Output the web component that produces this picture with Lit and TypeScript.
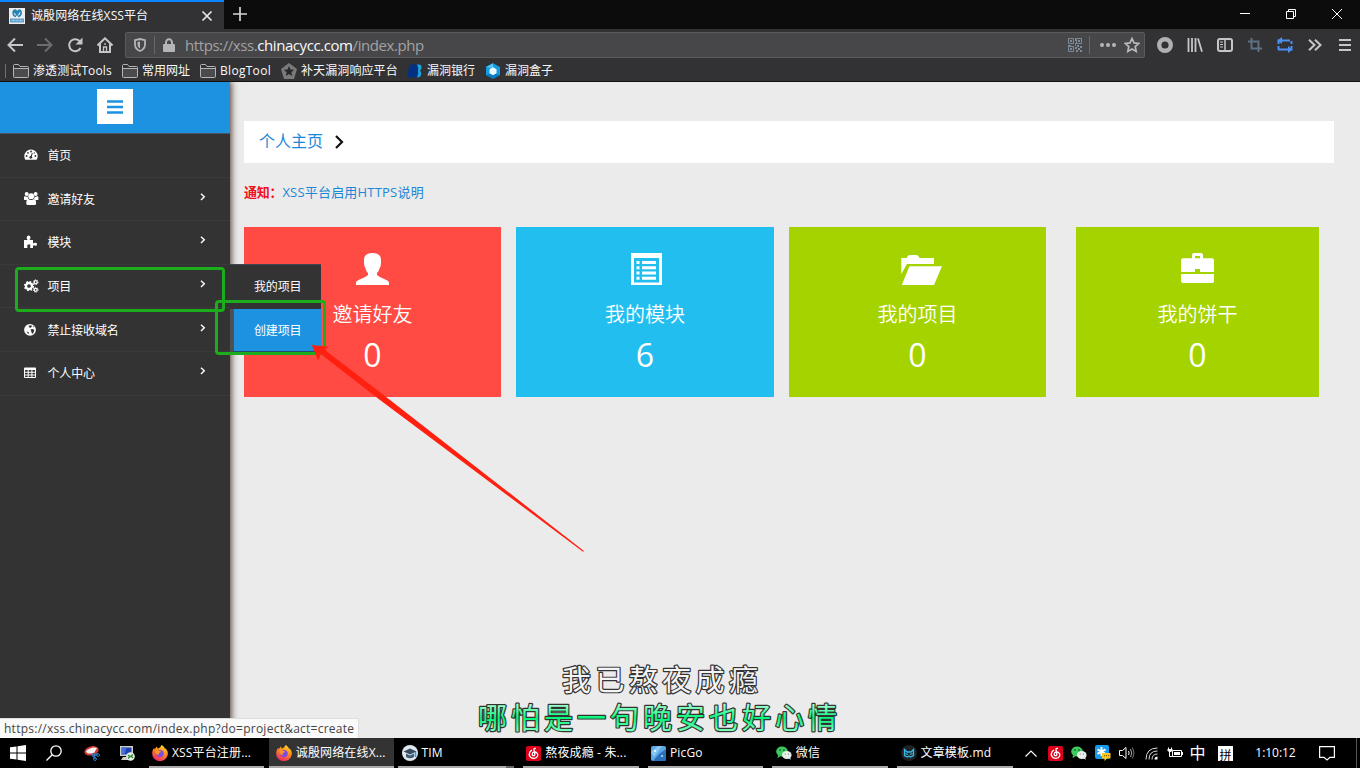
import { LitElement, html, svg, css, TemplateResult } from "lit";
import { customElement } from "lit/decorators.js";
import { classMap } from "lit/directives/class-map.js";

const icon = (w: number, h: number, body: TemplateResult, box = `0 0 ${w} ${h}`) =>
  html`<svg width=${w} height=${h} viewBox=${box} fill="none">${body}</svg>`;

const netease = () => icon(15, 15, svg`
  <rect width="15" height="15" rx="2" fill="#dd001b"/>
  <path d="M9.900 2.600C8.600 2 7.700 2.700 8 4l.9 4.300c.2 1.600-2.600 1.900-2.700.1C6.100 6.300 9 5.200 10.800 6.700c2.200 2 .7 5.500-2.900 5.600C4.200 12.400 2.300 9.200 3.800 6.200c.5-1 1.300-1.700 2.300-2.100" stroke="#fff" stroke-width="1.300"/>`);

const wechat = () => icon(16, 14, svg`
  <ellipse cx="6" cy="5.500" rx="5.800" ry="5" fill="#3ecb5c"/><path d="M2 9l-.5 3L5 10z" fill="#3ecb5c"/>
  <circle cx="4" cy="4" r=".8" fill="#125"/><circle cx="8" cy="4" r=".8" fill="#125"/>
  <ellipse cx="10.800" cy="9" rx="4.800" ry="4" fill="#e9eeea"/><path d="M12 12l2.800 1.700-.6-3z" fill="#e9eeea"/>
  <circle cx="9.200" cy="8" r=".6" fill="#667"/><circle cx="12.400" cy="8" r=".6" fill="#667"/>`);

const firefox = () => icon(16, 16, svg`
  <defs><linearGradient id="fx" x1=".8" y1="0" x2=".3" y2="1"><stop stop-color="#ffe226"/><stop offset=".45" stop-color="#ff8a1d"/><stop offset="1" stop-color="#f0246a"/></linearGradient></defs>
  <path d="M9.500 0c2 1 3 2.300 3.500 3.800l.7-.4c1.700 2 2.300 3.700 2.100 5.500C15.400 13 12.200 16 8 16 3.500 16 .2 12.600.2 8.400c0-2.300.7-4 2-5.600l.5 1.600C3.500 2.900 4.200 2 5 1.400L5.500 3.600C7.300 3.400 8.600 2 9.500 0z" fill="url(#fx)"/>
  <circle cx="8" cy="8.600" r="3.700" fill="#7d4be0"/><path d="M3.500 5.500c2-.8 3.200 0 4.600.4 1 .3 1 1.200-.2 1.600-1.700.6-1.800 1.800-.4 2.600C5 10.400 3.300 8.200 3.500 5.500z" fill="#ff9a1f"/>`);

const folder = () => icon(16, 14, svg`<path d="M.5 12.500v-11q0-1 1-1h4l1.500 2h7.500q1 0 1 1v9q0 1-1 1h-13q-1 0-1-1zM.5 4.500h15" stroke="#b4b4b6" stroke-width="1"/><path d="M1 5h14v8H1z" fill="#4b4b4d"/>`);

const BOOKMARKS = [
  { cls: "b1", text: "渗透测试Tools", glyph: folder },
  { cls: "b2", text: "常用网址", glyph: folder },
  { cls: "b3", text: "BlogTool", glyph: folder },
  { cls: "b4", text: "补天漏洞响应平台", glyph: () => icon(16, 16, svg`<path d="M8 0l8 6-3 10H3L0 6z" fill="#7a7a7a"/><path d="M8 3l1.500 3.400 3.700.3-2.800 2.500.8 3.700L8 11l-3.200 1.900.8-3.700-2.800-2.500 3.700-.3z" fill="#29292b"/>`) },
  { cls: "b5", text: "漏洞银行", glyph: () => icon(16, 14, svg`<path d="M3 .5h7.500v13H.5q0-8 2.500-13z" fill="#05307f"/><path d="M10 .5h2q3 0 2.500 3.500-.3 2-1.600 2.800 1.700 1 1.300 3.500-.6 3.200-4.200 3.200 2-3 1-6.500 1-3-1-6.500z" fill="#1aa4de"/>`) },
  { cls: "b6", text: "漏洞盒子", glyph: () => icon(16, 16, svg`<path d="M8 .2l7 3.900v7.800l-7 3.900-7-3.900V4.100z" fill="#159be0"/><path d="M1 4.100L8 .2v5z" fill="#50c8f5"/><path d="M1 12l7-2 7 2-7 3.800z" fill="#087bc4"/><path d="M8 4.200l3.500 2v4L8 12.200l-3.500-2v-4z" fill="#e8faff"/>`) },
];

const NAV = [
  { text: "首页", more: false, glyph: svg`<path d="M.3 8.200a6.700 6.700 0 1 1 13.400 0q0 1.800-1 3.500H1.300q-1-1.700-1-3.500z" fill="#fff"/><g fill="#333"><circle cx="2.600" cy="8" r=".9"/><circle cx="4" cy="4.800" r=".9"/><circle cx="7" cy="3.500" r=".9"/><circle cx="11.400" cy="8" r=".9"/><circle cx="10.300" cy="4.900" r=".7"/><circle cx="6.800" cy="9.300" r="1.400"/></g><path d="M7 9l1.300-4" stroke="#333" stroke-width="1"/>` },
  { text: "邀请好友", more: true, glyph: svg`<g fill="#fff"><circle cx="2.700" cy="2" r="2"/><circle cx="11.600" cy="2" r="2"/><circle cx="7.200" cy="4.200" r="2.900"/><path d="M0 7.500V5.400Q0 4 1 4.300q1.400.6 2.800.1-.2 1.800.9 2.700-1.500.3-2 .9H1Q0 8.100 0 7.500zM14.400 7.500V5.400q0-1.400-1-1.100-1.400.6-2.800.1.200 1.800-.9 2.700 1.500.3 2 .9h1.700q1 0 1-.5zM2.300 12q-.2-4.800 2.200-4.900 2.700 1.800 5.400 0 2.400.1 2.200 4.900-.3 1-1.500 1H3.800q-1.200 0-1.500-1z"/></g>` },
  { text: "模块", more: true, glyph: svg`<path d="M0 5h3.600Q2.500 3.600 2.700 2.200 3 .5 4.600.5t1.800 1.700Q6.500 3.600 5.500 5H9v2.900q1.200.8 2-.1 2-.3 2 1.400 0 1.800-1.600 1.600-1.300-1-2.400 0V13H6.300q-.4-1.300.1-2.400-.5-1.600-1.900-1.200-1.700.2-1.300 1.700.6 1 .1 1.900H0z" fill="#fff"/>` },
  { text: "项目", more: true, glyph: svg`<circle cx="5" cy="7" r="3" stroke="#fff" stroke-width="2.300"/><circle cx="5" cy="7" r="4.400" stroke="#fff" stroke-width="1.500" stroke-dasharray="1.730 1.730"/><circle cx="11.700" cy="3.200" r="1.500" stroke="#fff" stroke-width="1.300"/><circle cx="11.700" cy="3.200" r="2.400" stroke="#fff" stroke-dasharray=".95 .93"/><circle cx="11.700" cy="10.800" r="1.500" stroke="#fff" stroke-width="1.300"/><circle cx="11.700" cy="10.800" r="2.400" stroke="#fff" stroke-dasharray=".95 .93"/>` },
  { text: "禁止接收域名", more: true, glyph: svg`<circle cx="6" cy="6.800" r="5.900" fill="#fff"/><path d="M4.600 3l1.500-.8 2 .6-.8 1.400-1.500.8zM6.500 6.500l2-.6 1.800.8-.6 2.500-1.500 1.700-.8-2zM8.800 3l1.200.7-.8.8z" fill="#333"/><path d="M2.500 8.500L5 9.500l-.7 1.700z" fill="#333"/>` },
  { text: "个人中心", more: true, glyph: svg`<rect x="0" y="1.500" width="12" height="10.500" rx="1" fill="#fff"/><path d="M1 4h2.700v1.800H1zM4.700 4h2.700v1.800H4.700zM8.400 4H11v1.800H8.400zM1 6.700h2.700v1.700H1zM4.700 6.700h2.700v1.700H4.700zM8.400 6.700H11v1.700H8.400zM1 9.400h2.700v1.700H1zM4.700 9.400h2.700v1.700H4.700zM8.400 9.400H11v1.700H8.400z" fill="#333"/>` },
];

const CARDS = [
  { cls: "red", text: "邀请好友", count: 0, glyph: () => icon(33, 32, svg`<path d="M16.500 0C22 0 25 2.500 25 7v3q0 3-1.500 5.500-.5 3-2.500 4.500v2q2 2 5.500 3.200Q33 27.500 33 29.500V32H0v-2.500q0-2 6.500-4.300Q10 24 12 22v-2q-2-1.500-2.500-4.500Q8 13 8 10V7c0-4.500 3-7 8.500-7z" fill="#fff"/>`) },
  { cls: "blue", text: "我的模块", count: 6, glyph: () => icon(31, 32, svg`<path d="M0 0h31v32H0z" fill="#fff"/><path d="M3 5h25v24.500H3z" fill="#23bef0"/><path d="M5.500 8h3v3h-3zM11 8h14v3H11zM5.500 13.200h3v3h-3zM11 13.200h14v3H11zM5.500 18.500h3v3h-3zM11 18.500h14v3H11zM5.500 23.800h3v3h-3zM11 23.800h14v3H11z" fill="#fff"/>`) },
  { cls: "green", text: "我的项目", count: 0, glyph: () => icon(41, 32, svg`<path d="M.3 5H6V4q1-2 3-2h6.500q2 0 3 3H33v6H6L.3 21z" fill="#fff"/><path d="M8.500 13.200H41L33 32H.8z" fill="#fff"/>`) },
  { cls: "green last", text: "我的饼干", count: 0, glyph: () => icon(33, 32, svg`<path fill-rule="evenodd" d="M11 5.200V2q0-2 2-2h7q2 0 2 2v3.200h9q2 0 2 2V19H19v-3h-5v3H0V7.200q0-2 2-2zm3-2.200v2.200h5V3zM0 21h33v7q0 2-2 2H2q-2 0-2-2z" fill="#fff"/>`) },
];

const TASKS = [
  { text: "XSS平台注册...", active: false, glyph: firefox },
  { text: "诚殷网络在线X...", active: true, glyph: firefox },
  { text: "TIM", active: false, stacked: true, glyph: () => icon(16, 16, svg`<circle cx="8" cy="8" r="8" fill="#dfe8ef"/><path d="M1.500 6.500L8 3.500l6.500 3L8 9.500z" fill="#3b4b5e"/><path d="M4 8.500v3.500q4 2.500 8 0V8.500L8 10.400z" fill="#3f5b75"/><path d="M13.500 7v5" stroke="#20a6e8" stroke-width="1.500"/>`) },
  { text: "熬夜成瘾 - 朱...", active: false, glyph: netease },
  { text: "PicGo", active: false, glyph: () => icon(15, 15, svg`<rect width="15" height="15" rx="2" fill="#5da9e8"/><path d="M15 3v10q0 2-2 2H2L8 8z" fill="#2a70bd"/><path d="M0 6l7-6h4L3 11z" fill="#8ac8f4"/><circle cx="4" cy="5" r="1" fill="#fff"/><circle cx="11" cy="10" r="1" fill="#bde4ff"/>`) },
  { text: "微信", active: false, glyph: wechat },
  { text: "文章模板.md", active: false, glyph: () => icon(16, 16, svg`<circle cx="8" cy="8" r="8" fill="#1e2225"/><path d="M3.500 4.500L6 7h4l2.500-2.500v6L9.500 12 8 11l-1.500 1-3-1.500zM4.500 8.500L7 9.500M11.500 8.500L9 9.500" stroke="#39b9e8" stroke-width="1.300"/>`) },
];

@customElement("browser-chrome")
class BrowserChrome extends LitElement {
  static styles = css`
    :host { display: block; height: 82px; background: #323234; font: 12px/16px "Open Sans", "Noto Sans CJK SC", sans-serif; color: #f9f9fa; }
    * { box-sizing: border-box; }
    svg { display: block; flex: none; }
    .tabs { display: flex; height: 29px; background: #0c0c0d; }
    .tab { display: flex; align-items: center; width: 224px; padding: 0 11px 0 9px; border-top: 2px solid #0a84ff; background: #323234; }
    .title { flex: 1; margin: 0 0 0 6px; white-space: nowrap; letter-spacing: .1px; }
    .plus { margin: 7px 0 0 9px; }
    .window { display: flex; margin-left: auto; }
    .window span { width: 46px; height: 28px; display: grid; place-items: center; }
    .nav { display: flex; height: 32px; align-items: center; }
    .cell { width: 30px; height: 32px; display: grid; place-items: center; flex: none; }
    .address { display: flex; align-items: center; width: 1020px; height: 26px; margin: 0 5px; border: 1px solid #5b5b5d; border-radius: 2px; background: #474749; }
    .shield { margin-left: 8px; }
    .rule { width: 1px; height: 18px; background: #68686a; margin-left: 8px; flex: none; }
    .lock { margin-left: 8px; }
    .url { margin: -1px 0 0 10px; font-size: 15px; line-height: 22px; color: #a2a2a4; letter-spacing: -.42px; white-space: nowrap; }
    .url b { color: #f9f9fa; font-weight: 400; }
    .qr { margin-left: auto; }
    .qr + .rule { margin-left: 7px; }
    .dots { margin-left: 10px; }
    .star { margin: 0 4px 0 8px; }
    .marks { display: flex; height: 20px; align-items: center; padding-left: 5px; }
    .edge { width: 1px; height: 14px; margin-right: 7px; background: #707072; }
    .mark { display: flex; align-items: center; gap: 4px; white-space: nowrap; height: 20px; }
    .b1 { width: 109px; letter-spacing: .1px; } .b2 { width: 78px; } .b3 { width: 81px; letter-spacing: .3px; } .b4 { width: 126px; letter-spacing: .1px; } .b5 { width: 78px; } .b6 { width: 70px; }
  `;
  render() {
    const c = "#c6c6c8";
    return html`
      <div class="tabs">
        <div class="tab">
          ${icon(16, 16, svg`<path d="M0 0h16v16H0z" fill="#ededf0"/><path d="M7 8.500C3 7.500 3.500 2 6.500 2L8 4l2-2c3 .5 3 5.500-1 6.500M5.500 3L8 7l2.500-4" stroke="#2384b5" stroke-width="1.600"/><path d="M1 10.500h14v4H1z" fill="#5d9ecb"/><path d="M2 12.500h12M4.500 10.500v4M8 10.500v4M11.500 10.500v4" stroke="#9ac6e2" stroke-width=".7"/>`)}
          <span class="title">诚殷网络在线XSS平台</span>
          ${icon(12, 12, svg`<path d="M1.500 1.500l9 9M10.500 1.500l-9 9" stroke="#e8e8ea" stroke-width="1.700"/>`)}
        </div>
        <div class="plus">${icon(14, 14, svg`<path d="M7 0v14M0 7h14" stroke="#d5d5d7" stroke-width="1.700"/>`)}</div>
        <div class="window">
          <span>${icon(10, 10, svg`<path d="M0 4.500h10" stroke="#fff"/>`)}</span>
          <span>${icon(10, 10, svg`<path d="M.5 2.500h7v7h-7zM2.500 2V.5h7v7H8" stroke="#fff"/>`)}</span>
          <span>${icon(10, 10, svg`<path d="M0 0l10 10M10 0L0 10" stroke="#fff"/>`)}</span>
        </div>
      </div>
      <div class="nav">
        <div class="cell">${icon(16, 16, svg`<path d="M16 8H1.500M8 1.500L1.500 8 8 14.500" stroke="${c}" stroke-width="2"/>`)}</div>
        <div class="cell">${icon(16, 16, svg`<path d="M0 8h14.500M8 1.500L14.500 8 8 14.500" stroke="#6d6d6f" stroke-width="2"/>`)}</div>
        <div class="cell">${icon(16, 16, svg`<path d="M13 4.500A6 6 0 1 0 13.500 11" stroke="${c}" stroke-width="2"/><path d="M15.500.5v7h-7z" fill="${c}"/>`)}</div>
        <div class="cell">${icon(16, 16, svg`<path d="M.5 8.500L8 1.300l7.500 7.200M3 7v8h10V7" stroke="${c}" stroke-width="2"/><path d="M6.500 15v-5h3v5M8 6v2" stroke="${c}" stroke-width="1.300"/>`)}</div>
        <div class="address">
          <div class="shield">${icon(12, 14, svg`<path d="M1 2.200L6 1l5 1.200v4Q11 11 6 13 1 11 1 6.200z" stroke="#b5b5b7" stroke-width="1.800"/><path d="M6 3.500v7Q3.500 9 3.500 6.200V4.100z" fill="#b5b5b7"/>`)}</div>
          <i class="rule"></i>
          <div class="lock">${icon(12, 14, svg`<rect y="6" width="12" height="8" rx="1" fill="#b5b5b7"/><path d="M3 7V4.500a3 3.300 0 0 1 6 0V7" stroke="#b5b5b7" stroke-width="2"/>`)}</div>
          <span class="url">https://xss.<b>chinacycc.com</b>/index.php</span>
          <div class="qr">${icon(14, 14, svg`<path d="M.5.500h5v5h-5zM8.500.500h5v5h-5zM.5 8.500h5v5h-5z" stroke="#7d8b98"/><path d="M2 2h2v2H2zM10 2h2v2h-2zM2 10h2v2H2zM7 0h1v3H7zM7 5h1v3H7zM0 7h3v1H0zM9 7h2v2H9zM12 8h2v2h-2zM7 9h2v2H7zM10 10h2v2h-2zM8 12h2v2H8zM12 12h2v2h-2z" fill="#7d8b98"/>`)}</div>
          <i class="rule"></i>
          <div class="dots">${icon(16, 4, svg`<circle cx="2" cy="2" r="2" fill="#b5b5b7"/><circle cx="8" cy="2" r="2" fill="#b5b5b7"/><circle cx="14" cy="2" r="2" fill="#b5b5b7"/>`)}</div>
          <div class="star">${icon(16, 16, svg`<path d="M8 1.500l2 4.400 4.800.5-3.600 3.200 1 4.800L8 12l-4.200 2.400 1-4.800L1.200 6.400 6 5.900z" stroke="#b9b9bb" stroke-width="1.700"/>`)}</div>
        </div>
        <div class="cell">${icon(16, 16, svg`<circle cx="8" cy="8" r="5.800" stroke="#b0b0b2" stroke-width="4.400"/>`)}</div>
        <div class="cell">${icon(16, 14, svg`<path d="M1.500 0v14M5 0v14M8.500 0v14M11 .5L15 13.700" stroke="${c}" stroke-width="1.800"/>`)}</div>
        <div class="cell">${icon(16, 14, svg`<rect x="1" y="1" width="14" height="12" rx="2" stroke="${c}" stroke-width="2"/><path d="M8 1v12" stroke="${c}" stroke-width="1.500"/><path d="M3 4h3M3 6.500h3M3 9h3" stroke="${c}"/>`)}</div>
        <div class="cell">${icon(14, 14, svg`<path d="M3.500 0v10.500H14M0 3.500h10.500V14" stroke="#5d7182" stroke-width="2"/>`)}</div>
        <div class="cell">${icon(16, 16, svg`<path d="M1.500 12.500V9M1.500 7V3.500H13M14.500 4v3M14.500 9v3.500H3M1 12.500h3" stroke="#4a90f5" stroke-width="2"/><path d="M5 0v7L.5 3.500zM11 9v7l4.500-3.500z" fill="#4a90f5"/>`)}</div>
        <div class="cell">${icon(14, 12, svg`<path d="M1 .7L6.500 6 1 11.300M7 .7L12.500 6 7 11.300" stroke="${c}" stroke-width="2"/>`)}</div>
        <div class="cell">${icon(12, 12, svg`<path d="M0 1h12M0 6h12M0 11h12" stroke="${c}" stroke-width="2"/>`)}</div>
      </div>
      <div class="marks"><i class="edge"></i>
        ${BOOKMARKS.map((b) => html`<div class="mark ${b.cls}">${b.glyph()}<span>${b.text}</span></div>`)}
      </div>`;
  }
}

@customElement("side-nav")
class SideNav extends LitElement {
  static styles = css`
    :host { display: block; position: relative; z-index: 2; width: 230px; flex: none; background: #333; box-shadow: 0 0 7px 1px #4a3028; font: 12px/20px "Open Sans", "Noto Sans CJK SC", sans-serif; color: #fff; }
    * { box-sizing: border-box; }
    svg { display: block; overflow: visible; }
    .head { display: flex; justify-content: center; height: 52px; padding-top: 7px; background: #1c92e1; border-bottom: 1px solid #4a5560; }
    .toggle { width: 36px; height: 35px; background: #fff; display: grid; place-items: center; }
    .row { display: flex; align-items: center; height: 43.600px; border-bottom: 1px solid #3a3a3a; padding: 0 25px 0 24px; }
    .label { margin: 2px 0 0 9.500px; flex: 1; white-space: nowrap; letter-spacing: -.15px; }
    .more { margin-top: -4px; }
    .sub { position: absolute; left: 230px; top: 182px; width: 91px; height: 88px; background: #333; border-top: 1px solid #414750; }
    .item { display: flex; align-items: center; height: 44px; padding-left: 24px; letter-spacing: -.15px; }
    .item.hot { height: 43px; padding-left: 20px; background: #1c92e1; border-left: 4px solid #505050; border-bottom: 1px solid #284b6a; padding-top: 1px; }
  `;
  render() {
    return html`
      <div class="head"><div class="toggle">${icon(16, 14, svg`<path d="M0 1.500h16M0 7h16M0 12.500h16" stroke="#1c92e1" stroke-width="2.400"/>`)}</div></div>
      ${NAV.map((n) => html`<div class="row">${icon(14, 14, n.glyph)}<span class="label">${n.text}</span>
        ${n.more ? html`<div class="more">${icon(5, 8, svg`<path d="M1 .7L4.300 3.800 1 7" stroke="#fff" stroke-width="1.400"/>`)}</div>` : ""}</div>`)}
      <div class="sub"><div class="item">我的项目</div><div class="item hot">创建项目</div></div>`;
  }
}

@customElement("dashboard-view")
class DashboardView extends LitElement {
  static styles = css`
    :host { display: block; flex: 1; background: #ebebeb; padding: 39px 26px 0 14px; font-family: "Open Sans", "Noto Sans CJK SC", sans-serif; }
    * { box-sizing: border-box; }
    svg { display: block; }
    .crumb { display: flex; align-items: center; gap: 12px; height: 42px; padding: 0 15px 3px; background: #fff; color: #1c87d8; font-size: 16px; line-height: 24px; }
    .crumb svg { margin-top: 3px; }
    .notice { margin-top: 19px; height: 20px; font-size: 13px; line-height: 20px; color: #1c87d8; white-space: nowrap; letter-spacing: .2px; }
    .notice b { color: #f01020; letter-spacing: -.2px; }
    .cards { display: flex; gap: 15px; margin-top: 25px; }
    .card { width: 257px; height: 170px; display: flex; flex-direction: column; align-items: center; padding-top: 26px; color: #fff; font-size: 20px; }
    .label { margin-top: 15px; line-height: 30px; font-weight: 350; }
    .count { margin-top: 5px; font-size: 32px; line-height: 40px; }
    .red { background: #ff4b43; }
    .blue { background: #23bef0; width: 258px; }
    .blue svg { margin-left: 3px; }
    .green { background: #a4d300; }
    .green svg { margin-left: 8px; }
    .last { margin-left: 15px; width: 243px; }
    .last svg { margin-left: 0; }
  `;
  render() {
    return html`
      <div class="crumb"><span>个人主页</span>${icon(9, 14, svg`<path d="M1 1l6 6-6 6" stroke="#111" stroke-width="2.200"/>`)}</div>
      <div class="notice"><b>通知：</b>XSS平台启用HTTPS说明</div>
      <div class="cards">${CARDS.map((c) => html`<div class="card ${c.cls}">${c.glyph()}<div class="label">${c.text}</div><div class="count">${c.count}</div></div>`)}</div>`;
  }
}

@customElement("task-bar")
class TaskBar extends LitElement {
  static styles = css`
    :host { display: flex; height: 30px; background: #000; color: #fff; font: 12px/18px "Open Sans", "Noto Sans CJK SC", sans-serif; }
    * { box-sizing: border-box; }
    svg { display: block; flex: none; }
    .quick { display: grid; grid-template-columns: 35px 37px 39px 31px; place-items: center; width: 144px; }
    .task { width: 124.750px; padding: 0 4.500px; display: flex; }
    .inner { flex: 1; display: flex; align-items: center; gap: 4px; padding: 2px 0 0 3.500px; border-bottom: 2px solid #aaa; white-space: nowrap; letter-spacing: .15px; }
    .active { padding: 0; }
    .active .inner { background: #333; padding-left: 7px; }
    .stacked .inner { border-image: linear-gradient(90deg, #aaa 92%, #666 92%) 2; }
    .tray { display: grid; grid-template-columns: repeat(7, 24px) 21px 35px 65px 38px; place-items: center; margin-left: auto; margin-right: 10px; }
    .show { width: 1px; margin-right: 3px; background: #555; }
    .lang { font-size: 16px; }
    .ime { display: grid; place-items: center; width: 15px; height: 15px; background: #fff; color: #000; font: 12px/18px "Noto Sans CJK SC", sans-serif; }
    .clock { letter-spacing: -.05px; }
  `;
  render() {
    return html`
      <div class="quick">
        ${icon(16, 16, svg`<path d="M0 2.300L6.500 1.400v6.100H0zM7.500 1.200L16 0v7.500H7.500zM0 8.500h6.500v6.100L0 13.700zM7.500 8.500H16V16l-8.500-1.200z" fill="#fff"/>`)}
        ${icon(16, 16, svg`<circle cx="10" cy="6" r="5.200" stroke="#fff" stroke-width="1.300"/><path d="M6.200 9.800L.5 15.500" stroke="#fff" stroke-width="1.300"/>`)}
        ${icon(16, 16, svg`<ellipse cx="7.500" cy="5.800" rx="7.300" ry="4.500" fill="#d83b35" transform="rotate(-15 7.500 5.800)"/><path d="M2 6q6-5 11-3l-3 5q-4 1-7 0z" fill="#f3f4f6"/><path d="M9 8l2 6M14 9L8 11" stroke="#2c73b5" stroke-width="2"/><circle cx="11" cy="14" r="1.500" stroke="#2c73b5"/><circle cx="14" cy="10" r="1.500" stroke="#2c73b5"/>`)}
        ${icon(16, 16, svg`<path d="M1 1h13v10H1zM4 12h7v3H2z" fill="#cfcfc8"/><path d="M2.500 2.500h10v7h-10z" fill="#2142ae"/><path d="M2.500 2.500h5l-2 7h-3z" fill="#426fd8"/><circle cx="11.500" cy="11.500" r="4.300" fill="#e7efe4"/><path d="M9 10l2 1.500-2 2M14 9.500L12 11l2 2" stroke="#21822b" stroke-width="1.200"/>`)}
      </div>
      ${TASKS.map((t) => html`<div class=${classMap({ task: true, active: t.active, stacked: !!t.stacked })}><div class="inner">${t.glyph()}<span>${t.text}</span></div></div>`)}
      <div class="tray">
        ${icon(12, 7, svg`<path d="M.5 6.500L6 1l5.500 5.500" stroke="#fff" stroke-width="1.200"/>`)}
        ${netease()}${wechat()}
        ${icon(16, 16, svg`<rect width="14" height="14" rx="2" fill="#149bef"/><path d="M6.500 2v9M2.500 4.300l8 4.500M10.500 4.300l-8 4.500" stroke="#fff" stroke-width="1.900"/><path d="M7 8h8.500v5.500H12L9.500 16v-2.500H7z" fill="#ffc61c"/><path d="M9 10.700h1M11 10.700h1M13 10.700h1" stroke="#6b4b00"/>`)}
        ${icon(16, 14, svg`<path d="M.5 4.500h3l3.500-3v11l-3.500-3h-3z" stroke="#fff"/><path d="M9.500 5q1.300 2 0 4" stroke="#fff"/><path d="M11.500 3q2.500 4 0 8" stroke="#aaa"/><path d="M13.500 1.500q3 5.500 0 11" stroke="#777"/>`)}
        ${icon(13, 13, svg`<path d="M1 12.500Q1 1 12.500 1M4 12.500Q4 4 12.500 4M7 12.500Q7 7 12.500 7" stroke="#d8d8d8"/><path d="M9.500 12.500a3 3 0 0 1 3-3v3z" fill="#fff"/>`)}
        ${icon(16, 13, svg`<path d="M5.500 3.500h9v6h-9z" stroke="#fff"/><path d="M7 5h6v3H7z" fill="#fff"/><path d="M15.500 5v3M2.500 4.500v5h3M1.500.5v2M4.500.5v2" stroke="#fff"/><path d="M.5 2h5v1.500L4 5H2L.5 3.500z" fill="#fff"/>`)}
        <span class="lang">中</span><span class="ime">拼</span><span class="clock">1:10:12</span>
        ${icon(16, 16, svg`<path d="M.6 1.600h14.800v10.800H11L8 15l-3-2.600H.6z" stroke="#fff" stroke-width="1.200"/>`)}
      </div>
      <i class="show"></i>`;
  }
}

@customElement("app-root")
class AppRoot extends LitElement {
  static styles = css`
    :host { display: flex; flex-direction: column; position: relative; width: 1360px; height: 768px; overflow: hidden; }
    * { box-sizing: border-box; }
    browser-chrome { border-bottom: 1px solid #101011; }
    .page { display: flex; height: 656px; flex: none; overflow: hidden; }
    .status { position: absolute; z-index: 3; left: 0; top: 718px; width: 359px; height: 20px; padding-left: 4px; background: #fafafa; border-top: 1px solid #ddd; border-right: 1px solid #ddd; color: #444; font: 12px/20px "Open Sans", sans-serif; letter-spacing: .25px; white-space: nowrap; }
    .mark { position: absolute; z-index: 4; border: 3px solid #1bad1b; border-radius: 4px; }
    .first { left: 15px; top: 267px; width: 210px; height: 45px; }
    .second { left: 215px; top: 300px; width: 111px; height: 55px; }
    .arrow { position: absolute; z-index: 5; left: 300px; top: 335px; }
    .lyrics { position: absolute; z-index: 5; left: 460px; top: 656px; font-family: "Noto Sans CJK SC", sans-serif; font-size: 29px; }
    .lyrics text { stroke: #333; stroke-width: 2.400px; paint-order: stroke; stroke-linejoin: round; }
    .thin { font-weight: 400; }
  `;
  render() {
    return html`
      <browser-chrome></browser-chrome>
      <div class="page"><side-nav></side-nav><dashboard-view></dashboard-view></div>
      <task-bar></task-bar>
      <div class="status">https://xss.chinacycc.com/index.php?do=project&amp;act=create</div>
      <div class="mark first"></div><div class="mark second"></div>
      <svg class="arrow" width="300" height="225" viewBox="300 335 300 225"><path d="M311.700 345l17.300 1.700-4.500 3 65.500 50.300 194 151-1 .7L380 400l-59.300-46-2.400 6.700z" fill="#ff2010"/></svg>
      <svg class="lyrics" width="400" height="82">
        <defs><linearGradient id="lime" x1="0" y1="0" x2="0" y2="1"><stop offset=".2" stop-color="#b4ffd8"/><stop offset=".55" stop-color="#00f878"/><stop offset=".9" stop-color="#8dffc4"/></linearGradient></defs>
        <text class="thin" x="102" y="35" textLength="196" fill="#f4f4f6">我已熬夜成瘾</text>
        <text x="18" y="73" textLength="359" fill="url(#lime)">哪怕是一句晚安也好心情</text>
      </svg>`;
  }
}
